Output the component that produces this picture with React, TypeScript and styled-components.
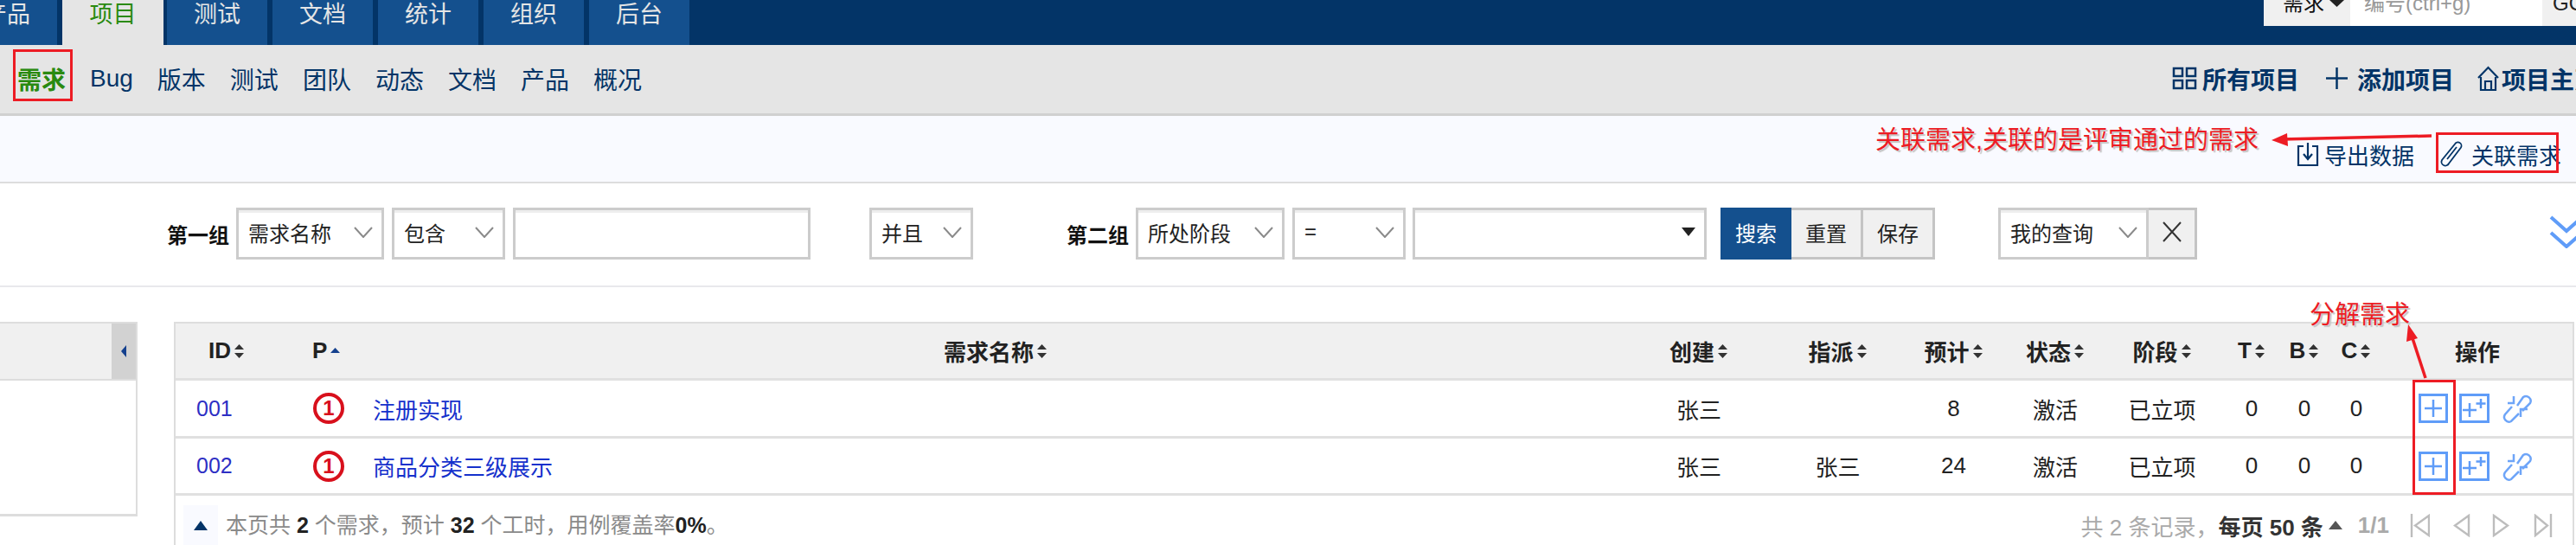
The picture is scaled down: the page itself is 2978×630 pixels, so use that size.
import styled, { createGlobalStyle } from 'styled-components';

const GlobalStyle = createGlobalStyle`
  html, body {
    margin: 0;
    padding: 0;
    background: #fff;
    overflow: hidden;
  }
  * {
    box-sizing: border-box;
  }
`;

const Page = styled.div`
  position: relative;
  width: 2978px;
  height: 630px;
  overflow: hidden;
  font-family: "Liberation Sans", "Noto Sans CJK SC", sans-serif;
  font-size: 26px;
  color: #222;
`;

const TopNav = styled.div`
  display: flex;
  height: 52px;
  background: #033467;
  margin-left: -50px;
`;

const NavTab = styled.div<{ $active?: boolean }>`
  width: ${({ $active }) => ($active ? '117px' : '116px')};
  margin-right: ${({ $active }) => ($active ? '4px' : '6px')};
  height: 52px;
  line-height: 34px;
  text-align: center;
  font-size: 27px;
  background: ${({ $active }) => ($active ? '#e5e5e5' : '#14508e')};
  color: ${({ $active }) => ($active ? '#2a8a10' : '#e5e5e5')};
`;

const QuickSearch = styled.div`
  display: flex;
  height: 30px;
  margin-left: auto;
  font-size: 24px;
  line-height: 8px;
  white-space: nowrap;
  overflow: hidden;
`;

const QuickType = styled.div`
  display: flex;
  align-items: flex-start;
  gap: 6px;
  width: 100px;
  padding-left: 22px;
  background: #f0f0f0;
  color: #111;
`;

const QuickInput = styled.div`
  width: 222px;
  padding-left: 16px;
  background: #fff;
  color: #999;
`;

const QuickGo = styled.div`
  width: 39px;
  padding-left: 12px;
  background: #f0f0f0;
  color: #222;
`;

const SubNav = styled.div`
  display: flex;
  align-items: center;
  height: 82px;
  padding-left: 20px;
  padding-bottom: 2px;
  background: #e5e5e5;
  border-bottom: 3px solid #d0d0d0;
  color: #033467;
  white-space: nowrap;
`;

const SubItem = styled.span<{ $active?: boolean }>`
  margin-right: 28px;
  font-size: 28px;
  color: ${({ $active }) => ($active ? '#2a8a10' : '#033467')};
  font-weight: ${({ $active }) => ($active ? 700 : 400)};
`;

const SubActions = styled.div`
  display: flex;
  align-items: center;
  margin-left: auto;
  margin-right: -26px;
  font-weight: 700;
  font-size: 28px;
`;

const SubAction = styled.span<{ $gap: number; $ml: number }>`
  display: flex;
  align-items: center;
  gap: ${({ $gap }) => $gap}px;
  margin-left: ${({ $ml }) => $ml}px;
`;

const ActionBar = styled.div`
  display: flex;
  justify-content: flex-end;
  align-items: center;
  height: 78px;
  padding-top: 12px;
  padding-right: 17px;
  background: #f9faff;
  border-bottom: 2px solid #ddd;
  color: #033467;
  white-space: nowrap;
`;

const BarAction = styled.span<{ $ml: number; $gap: number }>`
  display: flex;
  align-items: center;
  gap: ${({ $gap }) => $gap}px;
  margin-left: ${({ $ml }) => $ml}px;
`;

const FilterRow = styled.div`
  display: flex;
  align-items: center;
  height: 120px;
  padding-left: 193px;
  padding-bottom: 2px;
  border-bottom: 2px solid #e8e8ec;
  font-size: 24px;
  white-space: nowrap;
`;

const GroupLabel = styled.b<{ $ml?: number }>`
  margin-left: ${({ $ml }) => $ml ?? 0}px;
  margin-right: 8px;
  color: #111;
`;

const SelectBox = styled.div<{ $w: number; $ml?: number }>`
  display: flex;
  align-items: center;
  justify-content: space-between;
  width: ${({ $w }) => $w}px;
  margin-left: ${({ $ml }) => $ml ?? 0}px;
  height: 60px;
  padding: 0 10px 4px 11px;
  background: #fff;
  border: 3px solid #ccc;
  box-shadow: inset 0 3px 0 #eee;
  color: #222;
`;

const ToolButton = styled.div<{ $primary?: boolean; $w: number; $ml?: number }>`
  display: flex;
  align-items: center;
  justify-content: center;
  width: ${({ $w }) => $w}px;
  margin-left: ${({ $ml }) => $ml ?? 0}px;
  height: 60px;
  padding-bottom: 4px;
  background: ${({ $primary }) => ($primary ? '#14508e' : '#f0f0f0')};
  color: ${({ $primary }) => ($primary ? '#fff' : '#222')};
  border: 3px solid ${({ $primary }) => ($primary ? '#14508e' : '#c4c4c4')};
  border-left-width: ${({ $primary }) => ($primary ? 3 : 0)}px;
`;

const MoreToggle = styled.div`
  flex: none;
  margin-left: auto;
  margin-right: -9px;
  margin-top: -4px;
  width: 40px;
  height: 38px;
`;

const Content = styled.div`
  display: flex;
  gap: 42px;
  padding-top: 40px;
  align-items: flex-start;
`;

const SidePanel = styled.div`
  width: 159px;
  height: 225px;
  border: solid #ddd;
  border-width: 2px 2px 3px 0;
`;

const SideHead = styled.div`
  display: flex;
  justify-content: flex-end;
  height: 66px;
  background: #f0f0f0;
  border-bottom: 2px solid #ddd;
`;

const SideToggle = styled.div`
  display: flex;
  align-items: center;
  justify-content: center;
  width: 28px;
  background: #d2d2d2;
`;

const Table = styled.div`
  width: 2775px;
  height: 258px;
  border: solid #ddd;
  border-width: 2px 2px 0;
`;

const Row = styled.div<{ $head?: boolean; $h: number }>`
  display: grid;
  grid-template-columns: 120px 108px 1440px 186px 135px 133px 102px 145px 62px 60px 60px 220px;
  align-items: center;
  height: ${({ $h }) => $h}px;
  background: ${({ $head }) => ($head ? '#f0f0f0' : '#fff')};
  border-bottom: 3px solid #e0e0e0;
  font-weight: ${({ $head }) => ($head ? 700 : 400)};
  font-size: 26px;
  color: #222;
`;

const Cell = styled.div<{ $pl?: number }>`
  display: flex;
  align-items: center;
  justify-content: ${({ $pl }) => ($pl !== undefined ? 'flex-start' : 'center')};
  padding-left: ${({ $pl }) => $pl ?? 0}px;
  gap: 3px;
  white-space: nowrap;
`;

const IdLink = styled.span`
  color: #2d2fc4;
  font-size: 25px;
`;

const NameLink = styled.span`
  color: #1531cc;
`;

const PriBadge = styled.span`
  display: flex;
  align-items: center;
  justify-content: center;
  width: 36px;
  height: 36px;
  border: 4px solid #d8101c;
  border-radius: 50%;
  color: #d8101c;
  font-size: 24px;
  font-weight: 700;
`;

const Ops = styled.div`
  display: flex;
  align-items: center;
  padding-left: 42px;
`;

const OpSlot = styled.span<{ $ml: number }>`
  display: flex;
  margin-left: ${({ $ml }) => $ml}px;
`;

const TableFoot = styled.div`
  display: flex;
  align-items: flex-start;
  padding-left: 9px;
  padding-top: 11px;
  font-size: 25px;
  color: #8a8a8a;
  white-space: nowrap;
`;

const FootToggle = styled.div`
  display: flex;
  align-items: center;
  justify-content: center;
  width: 40px;
  height: 46px;
  background: #f9faff;
  margin-right: 9px;
`;

const FootText = styled.div`
  height: 46px;
  line-height: 46px;
  b {
    color: #222;
    font-weight: 700;
  }
`;

const Pager = styled.div`
  display: flex;
  align-items: center;
  height: 46px;
  margin-left: auto;
  margin-right: 22px;
  font-size: 26px;
  color: #aaa;
  white-space: pre;
  b {
    color: #333;
    font-weight: 700;
  }
`;

const PagerCaret = styled.svg`
  margin-left: 6px;
`;

const PagerCount = styled.span`
  margin-left: 18px;
  color: #aaa;
  font-weight: 700;
`;

const PagerIcon = styled.span<{ $ml: number }>`
  display: flex;
  margin-left: ${({ $ml }) => $ml}px;
`;

const RedBox = styled.div<{ $x: number; $y: number; $w: number; $h: number }>`
  position: absolute;
  left: ${({ $x }) => $x}px;
  top: ${({ $y }) => $y}px;
  width: ${({ $w }) => $w}px;
  height: ${({ $h }) => $h}px;
  border: 3px solid #ed1c24;
`;

const Note = styled.div<{ $x: number; $y: number }>`
  position: absolute;
  left: ${({ $x }) => $x}px;
  top: ${({ $y }) => $y}px;
  font-size: 29px;
  line-height: 32px;
  color: #ed1c24;
  white-space: nowrap;
  text-shadow: 2px 2px 1px #c4c4c4;
`;

const ArrowLayer = styled.svg`
  position: absolute;
  left: 0;
  top: 0;
  pointer-events: none;
`;

const Chevron = () => (
  <svg width="22" height="13" viewBox="0 0 22 13" fill="none" stroke="#8a8a8a" strokeWidth="2">
    <path d="M1 1l10 11L21 1" />
  </svg>
);

const Sort = ({ only }: { only?: boolean }) => (
  <svg width="13" height="16" viewBox="0 0 13 16">
    {only ? (
      <path d="M6.5 4L12 10H1z" fill="#14408e" />
    ) : (
      <path d="M6.5 0L12 6H1zM6.5 16L1 10h11z" fill="#333" />
    )}
  </svg>
);

const PlusIcon = () => (
  <svg width="34" height="34" viewBox="0 0 34 34" fill="none" stroke="#5f9cf8" strokeWidth="2.5">
    <rect x="1.5" y="1.5" width="31" height="31" strokeWidth="3" />
    <path d="M17 7v20M7 17h20" />
  </svg>
);

const PlusPlusIcon = () => (
  <svg width="35" height="34" viewBox="0 0 35 34" fill="none" stroke="#5f9cf8" strokeWidth="2.5">
    <rect x="1.5" y="1.5" width="32" height="31" strokeWidth="3" />
    <path d="M12 11v16M4 19h16M25 6v11M19.5 11.5h11" />
  </svg>
);

const BreakLinkIcon = () => (
  <svg width="34" height="34" viewBox="0 0 34 34" fill="none" stroke="#6ea5f8" strokeWidth="2.5">
    <path d="M17 14l7-10a5.5 5.5 0 0 1 8 7l-9 9" />
    <path d="M11 15l-8 9a5.5 5.5 0 0 0 7 8l9-9" />
    <path d="M6 11h7V3M21 27v-9h8" />
  </svg>
);

const GridIcon = () => (
  <svg width="29" height="27" viewBox="0 0 29 27" fill="none" stroke="#033467" strokeWidth="2.5">
    <rect x="2" y="2" width="10" height="9" />
    <rect x="17" y="2" width="10" height="9" />
    <rect x="2" y="16" width="10" height="9" />
    <rect x="17" y="16" width="10" height="9" />
  </svg>
);

const AddIcon = () => (
  <svg width="25" height="27" viewBox="0 0 25 27" fill="none" stroke="#033467" strokeWidth="2.5">
    <path d="M12.5 1v25M0 13.5h25" />
  </svg>
);

const HomeIcon = () => (
  <svg width="25" height="29" viewBox="0 0 25 29" fill="none" stroke="#033467" strokeWidth="2.2">
    <path d="M1 14L12.5 2 24 14M4 13v15h17V13M9 28V18h7v10" />
  </svg>
);

const ExportIcon = () => (
  <svg width="26" height="28" viewBox="0 0 26 28" fill="none" stroke="#033467" strokeWidth="2.2">
    <path d="M8 5H2v22h22V5h-6M13 1v18M8 14l5 6 5-6" />
  </svg>
);

const ClipIcon = () => (
  <svg width="28" height="30" viewBox="0 0 28 30" fill="none" stroke="#033467" strokeWidth="1.8">
    <path d="M18 3.5a4 4 0 0 1 7 4L11 26a4 4 0 0 1-8-4z" />
    <path d="M9 21L20 7" />
  </svg>
);

const PageIcon = ({ kind }: { kind: 'first' | 'prev' | 'next' | 'last' }) => {
  const paths = {
    first: 'M2 0v27M22 2L6 13.5 22 25z',
    prev: 'M19 2L3 13.5 19 25z',
    next: 'M2 2l16 11.5L2 25z',
    last: 'M20 0v27M2 2l14 11.5L2 25z',
  };
  return (
    <svg width="23" height="27" viewBox="0 0 23 27" fill="none" stroke="#bdbdbd" strokeWidth="2.4">
      <path d={paths[kind]} />
    </svg>
  );
};

const columns: { label: string; pl?: number; only?: boolean }[] = [
  { label: 'ID', pl: 38 },
  { label: 'P', pl: 38, only: true },
  { label: '需求名称' },
  { label: '创建' },
  { label: '指派' },
  { label: '预计' },
  { label: '状态' },
  { label: '阶段' },
  { label: 'T' },
  { label: 'B' },
  { label: 'C' },
];

const stories = [
  { id: '001', name: '注册实现', assignee: '', estimate: 8, height: 67 },
  { id: '002', name: '商品分类三级展示', assignee: '张三', estimate: 24, height: 66 },
];

export default function App() {
  return (
    <Page>
      <GlobalStyle />
      <TopNav>
        <NavTab>产品</NavTab>
        <NavTab $active>项目</NavTab>
        <NavTab>测试</NavTab>
        <NavTab>文档</NavTab>
        <NavTab>统计</NavTab>
        <NavTab>组织</NavTab>
        <NavTab>后台</NavTab>
        <QuickSearch>
          <QuickType>
            需求
            <svg width="17" height="8" viewBox="0 0 17 8">
              <path d="M0 0h17L8.5 8z" fill="#222" />
            </svg>
          </QuickType>
          <QuickInput>编号(ctrl+g)</QuickInput>
          <QuickGo>GO</QuickGo>
        </QuickSearch>
      </TopNav>

      <SubNav>
        <SubItem $active>需求</SubItem>
        <SubItem>Bug</SubItem>
        <SubItem>版本</SubItem>
        <SubItem>测试</SubItem>
        <SubItem>团队</SubItem>
        <SubItem>动态</SubItem>
        <SubItem>文档</SubItem>
        <SubItem>产品</SubItem>
        <SubItem>概况</SubItem>
        <SubActions>
          <SubAction $gap={6} $ml={0}>
            <GridIcon />
            所有项目
          </SubAction>
          <SubAction $gap={11} $ml={31}>
            <AddIcon />
            添加项目
          </SubAction>
          <SubAction $gap={3} $ml={27}>
            <HomeIcon />
            项目主页
          </SubAction>
        </SubActions>
      </SubNav>

      <ActionBar>
        <BarAction $ml={0} $gap={6}>
          <ExportIcon />
          导出数据
        </BarAction>
        <BarAction $ml={29} $gap={9}>
          <ClipIcon />
          关联需求
        </BarAction>
      </ActionBar>

      <FilterRow>
        <GroupLabel>第一组</GroupLabel>
        <SelectBox $w={171}>
          需求名称
          <Chevron />
        </SelectBox>
        <SelectBox $w={131} $ml={9}>
          包含
          <Chevron />
        </SelectBox>
        <SelectBox $w={344} $ml={9} />
        <SelectBox $w={120} $ml={68}>
          并且
          <Chevron />
        </SelectBox>
        <GroupLabel $ml={108}>第二组</GroupLabel>
        <SelectBox $w={172}>
          所处阶段
          <Chevron />
        </SelectBox>
        <SelectBox $w={131} $ml={9}>
          =
          <Chevron />
        </SelectBox>
        <SelectBox $w={340} $ml={8}>
          <span />
          <svg width="16" height="10" viewBox="0 0 16 10">
            <path d="M0 0h16L8 10z" fill="#222" />
          </svg>
        </SelectBox>
        <ToolButton $primary $w={82} $ml={16}>
          搜索
        </ToolButton>
        <ToolButton $w={83}>重置</ToolButton>
        <ToolButton $w={83}>保存</ToolButton>
        <SelectBox $w={174} $ml={73}>
          我的查询
          <Chevron />
        </SelectBox>
        <ToolButton $w={56}>
          <svg width="22" height="24" viewBox="0 0 22 24" fill="none" stroke="#333" strokeWidth="2">
            <path d="M1 1l20 22M21 1L1 23" />
          </svg>
        </ToolButton>
        <MoreToggle>
          <svg width="40" height="38" viewBox="0 0 40 38" fill="none" stroke="#5f9cf8" strokeWidth="4">
            <path d="M2 2l18 16L38 2M2 20l18 16 18-16" />
          </svg>
        </MoreToggle>
      </FilterRow>

      <Content>
        <SidePanel>
          <SideHead>
            <SideToggle>
              <svg width="6" height="14" viewBox="0 0 6 14">
                <path d="M6 0v14L0 7z" fill="#14408e" />
              </svg>
            </SideToggle>
          </SideHead>
        </SidePanel>

        <Table>
          <Row $head $h={66}>
            {columns.map((col) => (
              <Cell key={col.label} $pl={col.pl}>
                {col.label}
                <Sort only={col.only} />
              </Cell>
            ))}
            <Cell>操作</Cell>
          </Row>
          {stories.map((story) => (
            <Row key={story.id} $h={story.height}>
              <Cell $pl={24}>
                <IdLink>{story.id}</IdLink>
              </Cell>
              <Cell $pl={39}>
                <PriBadge>1</PriBadge>
              </Cell>
              <Cell $pl={0}>
                <NameLink>{story.name}</NameLink>
              </Cell>
              <Cell>张三</Cell>
              <Cell>{story.assignee}</Cell>
              <Cell>{story.estimate}</Cell>
              <Cell>激活</Cell>
              <Cell>已立项</Cell>
              <Cell>0</Cell>
              <Cell>0</Cell>
              <Cell>0</Cell>
              <Ops>
                <OpSlot $ml={0}>
                  <PlusIcon />
                </OpSlot>
                <OpSlot $ml={13}>
                  <PlusPlusIcon />
                </OpSlot>
                <OpSlot $ml={15}>
                  <BreakLinkIcon />
                </OpSlot>
              </Ops>
            </Row>
          ))}
          <TableFoot>
            <FootToggle>
              <svg width="16" height="11" viewBox="0 0 16 11">
                <path d="M8 0l8 11H0z" fill="#033467" />
              </svg>
            </FootToggle>
            <FootText>
              本页共 <b>2</b> 个需求，预计 <b>32</b> 个工时，用例覆盖率<b>0%</b>。
            </FootText>
            <Pager>
              共 2 条记录，
              <b>每页 50 条</b>
              <PagerCaret width="16" height="10" viewBox="0 0 16 10">
                <path d="M8 0l8 10H0z" fill="#555" />
              </PagerCaret>
              <PagerCount>1/1</PagerCount>
              <PagerIcon $ml={24}>
                <PageIcon kind="first" />
              </PagerIcon>
              <PagerIcon $ml={26}>
                <PageIcon kind="prev" />
              </PagerIcon>
              <PagerIcon $ml={23}>
                <PageIcon kind="next" />
              </PagerIcon>
              <PagerIcon $ml={25}>
                <PageIcon kind="last" />
              </PagerIcon>
            </Pager>
          </TableFoot>
        </Table>
      </Content>

      <RedBox $x={15} $y={57} $w={69} $h={60} />
      <RedBox $x={2816} $y={153} $w={142} $h={47} />
      <RedBox $x={2789} $y={439} $w={50} $h={133} />
      <Note $x={2168} $y={146}>关联需求,关联的是评审通过的需求</Note>
      <Note $x={2670} $y={348}>分解需求</Note>
      <ArrowLayer width="2978" height="630" viewBox="0 0 2978 630">
        <path d="M2811 157L2638 161" stroke="#ed1c24" strokeWidth="3.5" fill="none" />
        <path d="M2626 162l18-8 1 15z" fill="#ed1c24" />
        <path d="M2804 437L2788 388" stroke="#ed1c24" strokeWidth="3.5" fill="none" />
        <path d="M2784 375l11 16-13 4z" fill="#ed1c24" />
      </ArrowLayer>
    </Page>
  );
}
